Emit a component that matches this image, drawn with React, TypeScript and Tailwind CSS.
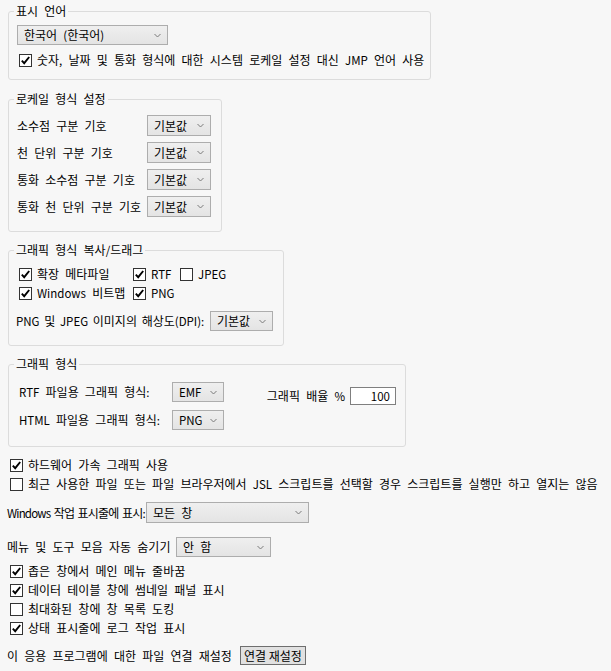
import type { ReactNode } from "react";

// Latin runs are drawn a bit smaller, like the Windows UI font next to Hangul
function T({ s }: { s: string }) {
  const parts = s.split(/([A-Za-z0-9%(),.:/]+)/);
  return (
    <>
      {parts.map((p, i) =>
        i % 2 === 1 ? (
          <span key={i} className="text-[11.5px]">
            {p}
          </span>
        ) : (
          p
        )
      )}
    </>
  );
}

function Chevron() {
  return (
    <svg width="7" height="5" viewBox="0 0 7 5" className="shrink-0">
      <path d="M0.5 1 L3.5 4 L6.5 1" fill="none" stroke="#7a7a7a" strokeWidth="1" />
    </svg>
  );
}

function Combo({ className, label }: { className: string; label: string }) {
  return (
    <div
      className={`flex items-center justify-between pl-[6px] pr-[6px] border border-[#adadad] bg-linear-to-b from-[#efefef] to-[#e4e4e4] whitespace-nowrap ${className}`}
    >
      <span>
        <T s={label} />
      </span>
      <Chevron />
    </div>
  );
}

function Check({ checked, label }: { checked: boolean; label: string }) {
  return (
    <label className="flex items-center gap-[5px] h-[16px] whitespace-nowrap">
      <span className="w-[13px] h-[13px] shrink-0 border border-[#333333] bg-white flex items-center justify-center">
        {checked && (
          <svg width="11" height="11" viewBox="0 0 11 11">
            <path d="M1.8 5.6 L4.2 8.2 L9.2 2" fill="none" stroke="#000" strokeWidth="1.9" />
          </svg>
        )}
      </span>
      <span>
        <T s={label} />
      </span>
    </label>
  );
}

function Group({
  title,
  className,
  children,
}: {
  title: string;
  className: string;
  children: ReactNode;
}) {
  return (
    <fieldset className={`ml-px border border-[#dcdcdc] rounded-[3px] p-0 m-0 min-w-0 ${className}`}>
      <legend className="ml-[5px] px-[2px] leading-[16px]">
        <T s={title} />
      </legend>
      {children}
    </fieldset>
  );
}

export default function App() {
  return (
    <div className="w-[611px] h-[671px] overflow-hidden bg-[#f7f7f7] text-black text-[12px] leading-[16px] [word-spacing:3.5px] font-['Noto_Sans_CJK_KR',sans-serif] pt-[3px] pl-[7px]">
      {/* 표시 언어 */}
      <Group title="표시 언어" className="w-[423px]">
        <div className="pl-[8px] pt-[6px] pb-[11px]">
          <Combo className="w-[151px] h-[20px]" label="한국어 (한국어)" />
          <div className="mt-[7px] pl-[2px]">
            <Check checked label="숫자, 날짜 및 통화 형식에 대한 시스템 로케일 설정 대신 JMP 언어 사용" />
          </div>
        </div>
      </Group>

      {/* 로케일 형식 설정 */}
      <Group title="로케일 형식 설정" className="w-[214px] mt-[11px]">
        <div className="pl-[8px] pt-[8px] pb-[14px] grid grid-cols-[130px_64px] gap-y-[6px] items-center">
          {["소수점 구분 기호", "천 단위 구분 기호", "통화 소수점 구분 기호", "통화 천 단위 구분 기호"].map((l) => (
            <div key={l} className="contents">
              <span className="whitespace-nowrap">{l}</span>
              <Combo className="w-[64px] h-[21px]" label="기본값" />
            </div>
          ))}
        </div>
      </Group>

      {/* 그래픽 형식 복사/드래그 */}
      <Group title="그래픽 형식 복사/드래그" className="w-[276px] mt-[10px]">
        <div className="pl-[7px] pt-[8px] pb-[14px]">
          <div className="pl-[3px] grid grid-cols-[114px_47px_auto] gap-y-[3px]">
            <Check checked label="확장 메타파일" />
            <Check checked label="RTF" />
            <Check checked={false} label="JPEG" />
            <Check checked label="Windows 비트맵" />
            <Check checked label="PNG" />
          </div>
          <div className="mt-[10px] flex items-center">
            <span className="w-[194px] whitespace-nowrap [word-spacing:2px]">
              <T s="PNG 및 JPEG 이미지의 해상도(DPI):" />
            </span>
            <Combo className="w-[63px] h-[20px]" label="기본값" />
          </div>
        </div>
      </Group>

      {/* 그래픽 형식 */}
      <Group title="그래픽 형식" className="w-[398px] mt-[10px]">
        <div className="pl-[10px] pr-[9px] pt-[10px] pb-[16px] flex justify-between items-start">
          <div className="grid grid-cols-[153px_52px] gap-y-[8px] items-center">
            <span className="whitespace-nowrap">
              <T s="RTF 파일용 그래픽 형식:" />
            </span>
            <Combo className="w-[52px] h-[20px]" label="EMF" />
            <span className="whitespace-nowrap">
              <T s="HTML 파일용 그래픽 형식:" />
            </span>
            <Combo className="w-[52px] h-[20px]" label="PNG" />
          </div>
          <div className="mt-[5px] flex items-center gap-[5px]">
            <span className="whitespace-nowrap">
              <T s="그래픽 배율 %" />
            </span>
            <div className="w-[46px] h-[18px] bg-white border border-[#7f7f7f] text-right pr-[5px] leading-[16px]">
              <T s="100" />
            </div>
          </div>
        </div>
      </Group>

      <div className="mt-[10px] pl-[3px] flex flex-col gap-[3px]">
        <Check checked label="하드웨어 가속 그래픽 사용" />
        <Check
          checked={false}
          label="최근 사용한 파일 또는 파일 브라우저에서 JSL 스크립트를 선택할 경우 스크립트를 실행만 하고 열지는 않음"
        />
      </div>

      <div className="mt-[10px] flex items-center">
        <span className="w-[139px] whitespace-nowrap [word-spacing:1.5px] tracking-[-0.8px]">
          <T s="Windows 작업 표시줄에 표시:" />
        </span>
        <Combo className="w-[163px] h-[21px]" label="모든 창" />
      </div>

      <div className="mt-[14px] flex items-center">
        <span className="w-[169px] whitespace-nowrap">메뉴 및 도구 모음 자동 숨기기</span>
        <Combo className="w-[95px] h-[20px]" label="안 함" />
      </div>

      <div className="mt-[6px] pl-[3px] flex flex-col gap-[3px]">
        <Check checked label="좁은 창에서 메인 메뉴 줄바꿈" />
        <Check checked label="데이터 테이블 창에 썸네일 패널 표시" />
        <Check checked={false} label="최대화된 창에 창 목록 도킹" />
        <Check checked label="상태 표시줄에 로그 작업 표시" />
      </div>

      <div className="mt-[10px] flex items-center">
        <span className="w-[233px] whitespace-nowrap">이 응용 프로그램에 대한 파일 연결 재설정</span>
        <button className="h-[19px] px-[3px] border border-[#6e6e6e] bg-[#e1e1e1] leading-[15px] whitespace-nowrap">
          연결 재설정
        </button>
      </div>
    </div>
  );
}
